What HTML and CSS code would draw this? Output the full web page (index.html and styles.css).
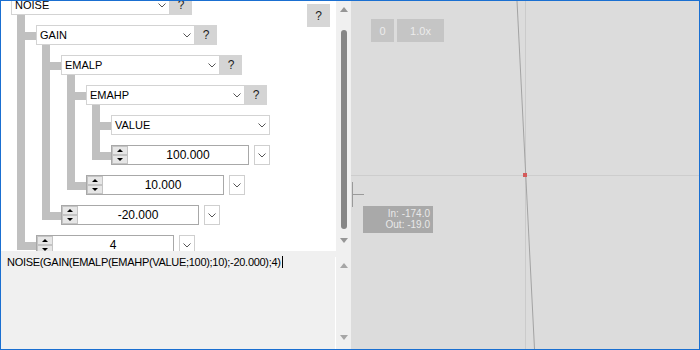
FILE: index.html
```html
<!DOCTYPE html>
<html lang="en">
<head>
    <meta charset="UTF-8">
    <title>Transfer Editor</title>
    <link rel="stylesheet" href="styles.css">
</head>
<body>
<div class="window">
    <div class="side">
        <div class="top">
            <div class="tree-area">
                <div class="tree">
                    <div class="node">
                        <div class="row">
                            <div class="select"><span>NOISE</span><svg class="chev" width="8" height="5" viewBox="0 0 8 5"><path d="M0.5 0.5 L4 4 L7.5 0.5"/></svg></div>
                            <div class="help">?</div>
                        </div>
                        <div class="kids">
                            <div class="node">
                                <div class="row">
                                    <div class="select"><span>GAIN</span><svg class="chev" width="8" height="5" viewBox="0 0 8 5"><path d="M0.5 0.5 L4 4 L7.5 0.5"/></svg></div>
                                    <div class="help">?</div>
                                </div>
                                <div class="kids">
                                    <div class="node">
                                        <div class="row">
                                            <div class="select"><span>EMALP</span><svg class="chev" width="8" height="5" viewBox="0 0 8 5"><path d="M0.5 0.5 L4 4 L7.5 0.5"/></svg></div>
                                            <div class="help">?</div>
                                        </div>
                                        <div class="kids">
                                            <div class="node">
                                                <div class="row">
                                                    <div class="select"><span>EMAHP</span><svg class="chev" width="8" height="5" viewBox="0 0 8 5"><path d="M0.5 0.5 L4 4 L7.5 0.5"/></svg></div>
                                                    <div class="help">?</div>
                                                </div>
                                                <div class="kids">
                                                    <div class="node">
                                                        <div class="row">
                                                            <div class="select"><span>VALUE</span><svg class="chev" width="8" height="5" viewBox="0 0 8 5"><path d="M0.5 0.5 L4 4 L7.5 0.5"/></svg></div>
                                                        </div>
                                                    </div>
                                                    <div class="node">
                                                        <div class="row">
                                                            <div class="number">
                                                                <div class="spin"><span class="up"></span><span class="down"></span></div>
                                                                <span class="val">100.000</span>
                                                            </div>
                                                            <div class="more"><svg class="chev" width="8" height="5" viewBox="0 0 8 5"><path d="M0.5 0.5 L4 4 L7.5 0.5"/></svg></div>
                                                        </div>
                                                    </div>
                                                </div>
                                            </div>
                                            <div class="node">
                                                <div class="row">
                                                    <div class="number">
                                                        <div class="spin"><span class="up"></span><span class="down"></span></div>
                                                        <span class="val">10.000</span>
                                                    </div>
                                                    <div class="more"><svg class="chev" width="8" height="5" viewBox="0 0 8 5"><path d="M0.5 0.5 L4 4 L7.5 0.5"/></svg></div>
                                                </div>
                                            </div>
                                        </div>
                                    </div>
                                    <div class="node">
                                        <div class="row">
                                            <div class="number">
                                                <div class="spin"><span class="up"></span><span class="down"></span></div>
                                                <span class="val">-20.000</span>
                                            </div>
                                            <div class="more"><svg class="chev" width="8" height="5" viewBox="0 0 8 5"><path d="M0.5 0.5 L4 4 L7.5 0.5"/></svg></div>
                                        </div>
                                    </div>
                                </div>
                            </div>
                            <div class="node">
                                <div class="row">
                                    <div class="number">
                                        <div class="spin"><span class="up"></span><span class="down"></span></div>
                                        <span class="val">4</span>
                                    </div>
                                    <div class="more"><svg class="chev" width="8" height="5" viewBox="0 0 8 5"><path d="M0.5 0.5 L4 4 L7.5 0.5"/></svg></div>
                                </div>
                            </div>
                        </div>
                    </div>
                </div>
                <div class="help help-float">?</div>
            </div>
            <div class="scrollbar">
                <span class="arrow-up"></span>
                <span class="thumb"></span>
                <span class="arrow-down"></span>
            </div>
        </div>
        <div class="bottom">
            <div class="formula">NOISE(GAIN(EMALP(EMAHP(VALUE;100);10);-20.000);4)<span class="caret"></span></div>
            <div class="edge"></div>
            <div class="scrollbar light">
                <span class="arrow-up"></span>
                <span class="arrow-down"></span>
            </div>
        </div>
    </div>

    <!-- transfer curve preview -->
    <div class="canvas">
        <svg class="plot" width="348" height="348" viewBox="0 0 348 348">
            <line x1="174.5" y1="0" x2="174.5" y2="348" stroke="#cbcbcb"/>
            <line x1="0" y1="174.5" x2="348" y2="174.5" stroke="#cdcdcd"/>
            <line x1="166" y1="0" x2="183.5" y2="348" stroke="#a3a3a3"/>
            <rect x="172" y="172" width="4" height="4" fill="#d45a5a"/>
            <line x1="1.5" y1="181" x2="1.5" y2="206" stroke="#9a9a9a"/>
            <line x1="1" y1="193.5" x2="13" y2="193.5" stroke="#9a9a9a"/>
        </svg>
        <div class="zoom-btns">
            <div class="cbtn">0</div>
            <div class="cbtn wide">1.0x</div>
        </div>
        <div class="readout">In: -174.0<br>Out: -19.0</div>
    </div>
</div>
</body>
</html>
```

FILE: styles.css
```css
/* Global */
body {
    margin: 0;
    font-family: "Liberation Sans", Arial, sans-serif;
    font-size: 11px;
    color: #000;
}

.window {
    width: 700px;
    height: 350px;
    box-sizing: border-box;
    border: 1px solid #1a6fd1;
    display: flex;
    overflow: hidden;
}

.side {
    width: 350px;
    display: flex;
    flex-direction: column;
}

.top {
    height: 250px;
    display: flex;
}

/* Tree */
.tree-area {
    position: relative;
    width: 335px;
    background: #fff;
    overflow: hidden;
}

.tree {
    margin-top: -6px;
    padding-left: 10px;
}

.row {
    display: flex;
    height: 20px;
}

.kids {
    position: relative;
    display: flex;
    flex-direction: column;
    gap: 10px;
    padding-top: 10px;
    margin-left: 25px;
}

.kids::before {
    content: "";
    position: absolute;
    left: -19px;
    top: 0;
    bottom: 5px;
    width: 8px;
    background: #c0c0c0;
}

.kids > .node > .row {
    position: relative;
}

.kids > .node > .row::before {
    content: "";
    position: absolute;
    left: -11px;
    top: 7px;
    width: 11px;
    height: 8px;
    background: #c0c0c0;
}

.select {
    width: 159px;
    height: 20px;
    box-sizing: border-box;
    border: 1px solid #d3d3d3;
    background: #fff;
    display: flex;
    align-items: center;
    justify-content: space-between;
    padding: 0 3px 0 3px;
}

.chev path {
    fill: none;
    stroke: #555;
    stroke-width: 1;
}

.help {
    width: 22px;
    height: 20px;
    background: #d4d4d4;
    display: flex;
    align-items: center;
    justify-content: center;
    font-size: 12px;
    color: #1c1c1c;
}

.help-float {
    position: absolute;
    top: 3px;
    right: 6px;
    width: 23px;
    height: 23px;
    background: #d6d6d6;
}

.number {
    width: 138px;
    height: 20px;
    box-sizing: border-box;
    border: 1px solid #a8a8a8;
    background: #fff;
    display: flex;
}

.spin {
    width: 16px;
    display: flex;
    flex-direction: column;
}

.spin span {
    flex: 1;
    background: #e6e6e6;
    border: 1px solid #c4c4c4;
    display: flex;
    align-items: center;
    justify-content: center;
}

.spin .up::after {
    content: "";
    border-left: 3px solid transparent;
    border-right: 3px solid transparent;
    border-bottom: 3px solid #000;
}

.spin .down::after {
    content: "";
    border-left: 3px solid transparent;
    border-right: 3px solid transparent;
    border-top: 3px solid #000;
}

.val {
    flex: 1;
    text-align: center;
    line-height: 18px;
    font-size: 12px;
}

.more {
    width: 16px;
    height: 20px;
    box-sizing: border-box;
    margin-left: 5px;
    border: 1px solid #cfcfcf;
    background: #fff;
    display: flex;
    align-items: center;
    justify-content: center;
}

/* Scrollbars */
.scrollbar {
    width: 15px;
    background: #f0f0f0;
    display: flex;
    flex-direction: column;
    align-items: center;
    padding-top: 6px;
}

.arrow-up {
    border-left: 4px solid transparent;
    border-right: 4px solid transparent;
    border-bottom: 5px solid #969696;
}

.arrow-down {
    border-left: 4px solid transparent;
    border-right: 4px solid transparent;
    border-top: 5px solid #969696;
    margin-top: 9px;
}

.thumb {
    width: 6px;
    height: 199px;
    margin-top: 18px;
    border-radius: 3px;
    background: #868686;
}

.scrollbar.light {
    padding-top: 12px;
}

.scrollbar.light .arrow-up {
    border-bottom-color: #a6a6a6;
}

.scrollbar.light .arrow-down {
    border-top-color: #a6a6a6;
    margin-top: 67px;
}

/* Formula box */
.bottom {
    height: 98px;
    display: flex;
    background: #f0f0f0;
}

.formula {
    width: 334px;
    box-sizing: border-box;
    padding: 5px 6px;
    line-height: 13px;
    letter-spacing: -0.3px;
    white-space: nowrap;
}

.caret {
    display: inline-block;
    width: 1px;
    height: 12px;
    margin-left: 1px;
    vertical-align: -2px;
    background: #000;
}

.edge {
    width: 1px;
    margin-top: 6px;
    background: #fff;
}

/* Canvas */
.canvas {
    position: relative;
    flex: 1;
    background: #dcdcdc;
    overflow: hidden;
}

.plot {
    display: block;
}

.zoom-btns {
    position: absolute;
    left: 20px;
    top: 18px;
    display: flex;
    gap: 3px;
}

.cbtn {
    width: 23px;
    height: 23px;
    background: #c5c5c5;
    color: #ececec;
    display: flex;
    align-items: center;
    justify-content: center;
}

.cbtn.wide {
    width: 47px;
}

.readout {
    position: absolute;
    left: 12px;
    top: 205px;
    width: 70px;
    height: 27px;
    box-sizing: border-box;
    padding: 2px 3px 0 0;
    background: #a9a9a9;
    color: #e8e8e8;
    font-size: 10px;
    line-height: 11px;
    text-align: right;
}
```
